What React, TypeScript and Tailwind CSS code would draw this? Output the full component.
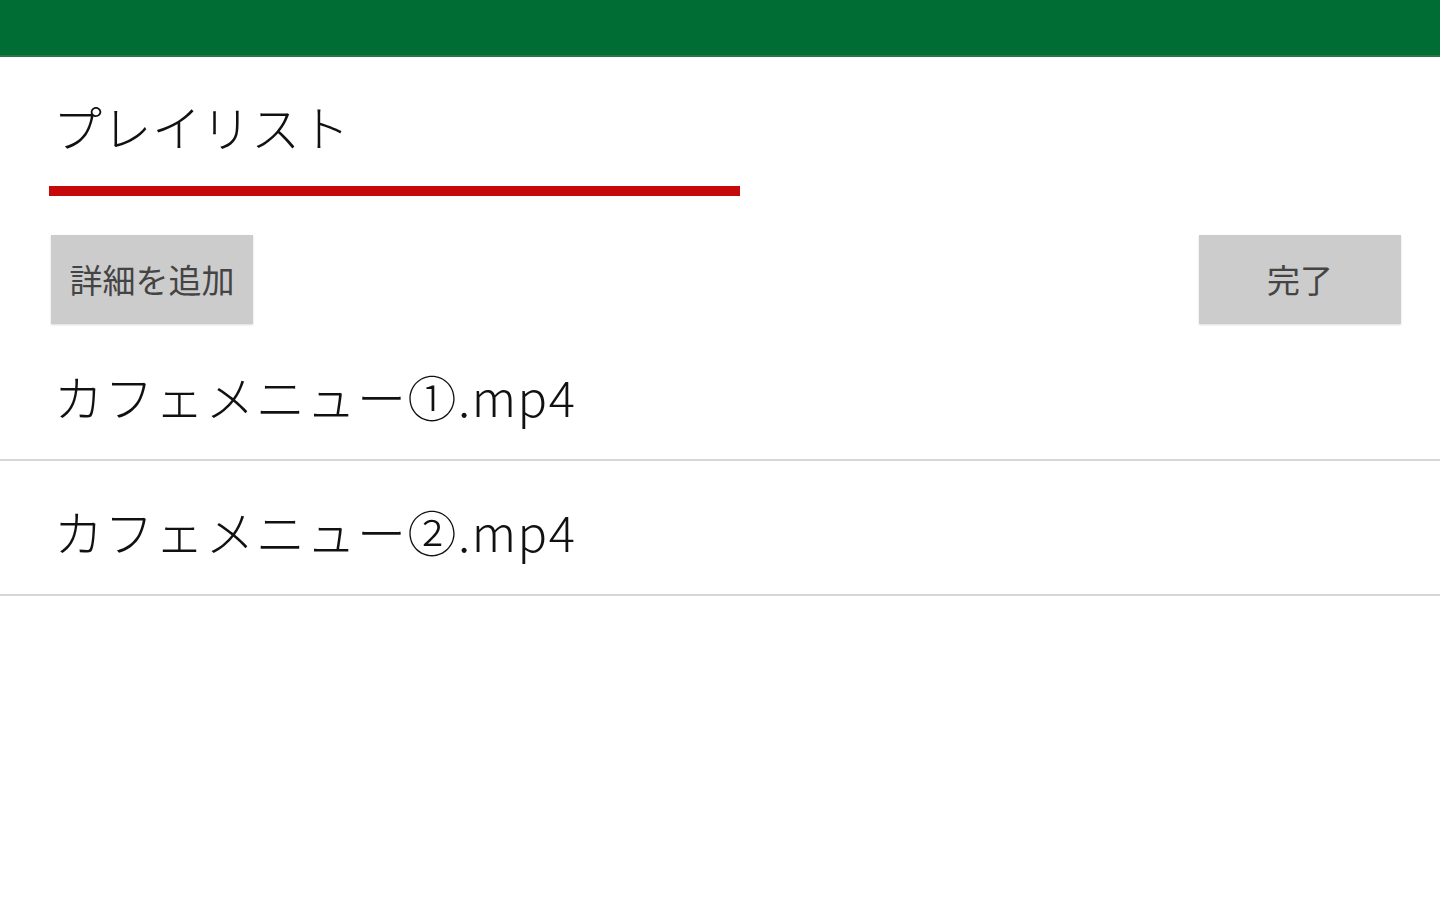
const font = {
  fontFamily: '"Noto Sans CJK JP", "Noto Sans", sans-serif',
};

const items = ["カフェメニュー①.mp4", "カフェメニュー②.mp4"];

export default function App() {
  return (
    <div className="min-h-[900px] w-[1440px] bg-white" style={font}>
      <header className="h-[57px] border-b-2 border-[#1f7a45] bg-[#006e34]" />

      <section className="pl-[49px] pt-[39px]">
        <h1 className="pl-[4px] text-[49px] font-light leading-[60px] tracking-[0.5px] text-[#111]">
          プレイリスト
        </h1>
        <div className="mt-[30px] h-[10px] w-[691px] bg-[#c40a0a]" />
      </section>

      <div className="flex items-center justify-between pl-[51px] pr-[39px] pt-[39px]">
        <button className="h-[89px] w-[202px] bg-[#cccccc] text-[33px] text-[#444] shadow-[0_1px_2px_rgba(0,0,0,0.15)]">
          詳細を追加
        </button>
        <button className="h-[89px] w-[202px] bg-[#cccccc] text-[33px] text-[#444] shadow-[0_1px_2px_rgba(0,0,0,0.15)]">
          完了
        </button>
      </div>

      <ul className="mt-[2px]">
        {items.map((name) => (
          <li
            key={name}
            className="flex h-[135px] items-center border-b-2 border-[#d6d6d6] pl-[54px] pt-[6px] text-[49px] font-light tracking-[1.5px] text-[#111]"
          >
            {name}
          </li>
        ))}
      </ul>
    </div>
  );
}
